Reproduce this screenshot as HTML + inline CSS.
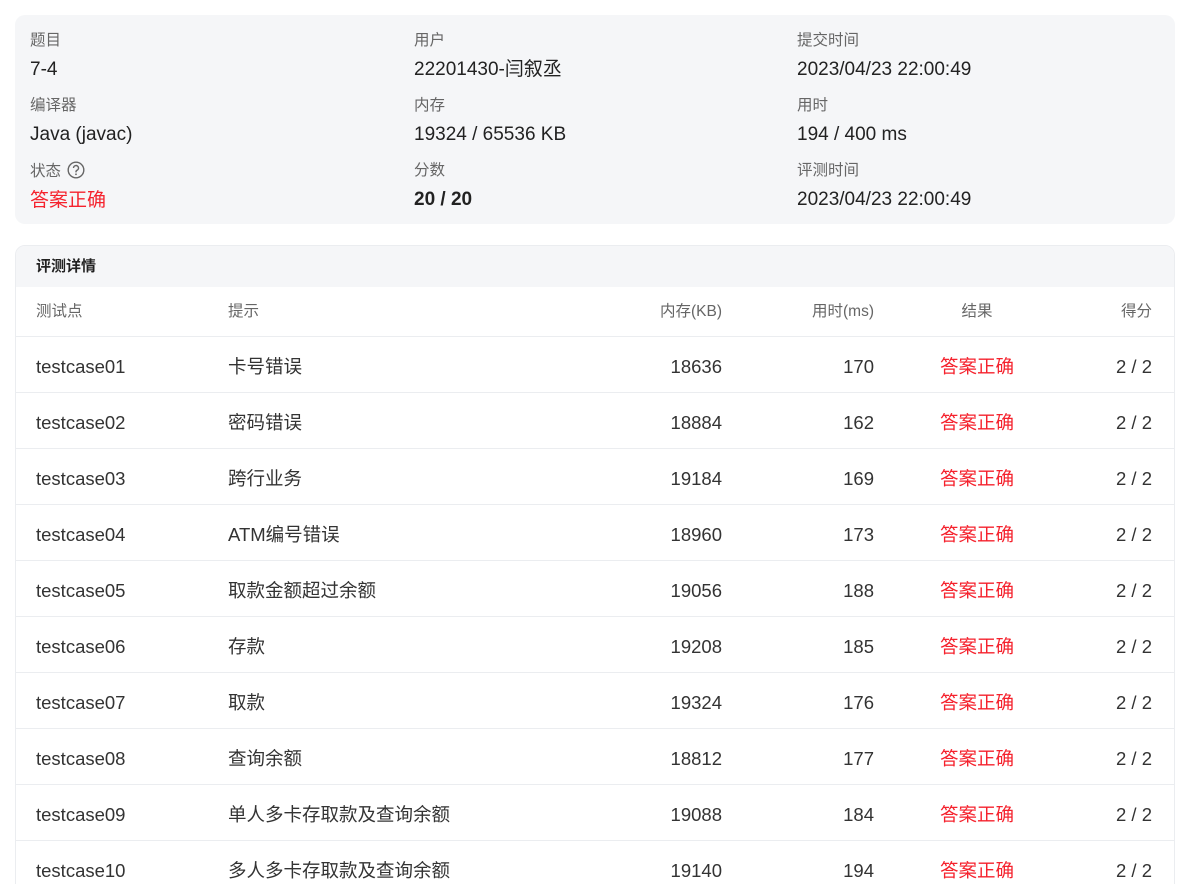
<!DOCTYPE html>
<html><head><meta charset="utf-8"><style>
*{margin:0;padding:0;box-sizing:border-box}
html,body{width:1180px;height:884px;overflow:hidden}
body{background:#fff;font-family:"Liberation Sans","Noto Sans CJK SC",sans-serif;color:#333;position:relative}
.card{position:absolute;left:15px;top:15px;width:1160px;height:209px;background:#f5f6f8;border-radius:10px}
.it{position:absolute}
.lb{font-size:15.5px;color:#666;line-height:20px;margin-top:1px}
.vl{font-size:19px;color:#222;line-height:24px;margin-top:7px}
.red{color:#f5222d}
.t2{position:absolute;left:15px;top:245px;width:1160px;height:700px;border:1px solid #ebedf0;border-radius:10px;overflow:hidden}
.hd{height:41px;background:#f5f6f8;font-size:15px;line-height:41px;padding-left:20px;color:#222;font-weight:bold}
.row{position:relative;height:56px;border-bottom:1px solid #ebedf0;font-size:18.5px;color:#333}
.row.h{height:50px;font-size:15.5px;color:#666}
.row span{position:absolute;top:2px;line-height:56px}
.row.h span{line-height:50px;top:0}
.c1{left:20px}.c2{left:212px}
.c3{right:452px;text-align:right}.c4{right:300px}
.c5{left:911px;width:100px;text-align:center}.c6{right:22px}
</style></head><body>
<div class="card">
<div class="it" style="left:15px;top:15px"><div class="lb">题目</div><div class="vl">7-4</div></div>
<div class="it" style="left:15px;top:80px"><div class="lb">编译器</div><div class="vl">Java (javac)</div></div>
<div class="it" style="left:15px;top:145px"><div class="lb">状态 <svg width="18" height="18" viewBox="0 0 18 18" style="vertical-align:-3px;margin-left:2px"><circle cx="9" cy="9" r="7.8" fill="none" stroke="#666" stroke-width="1.4"/><path d="M6.5 7a2.5 2.5 0 1 1 3.5 2.3c-.7.3-1 .8-1 1.5v.6" fill="none" stroke="#666" stroke-width="1.4"/><circle cx="9" cy="13.3" r=".9" fill="#666"/></svg></div><div class="vl red">答案正确</div></div>
<div class="it" style="left:399px;top:15px"><div class="lb">用户</div><div class="vl">22201430-闫叙丞</div></div>
<div class="it" style="left:399px;top:80px"><div class="lb">内存</div><div class="vl">19324 / 65536 KB</div></div>
<div class="it" style="left:399px;top:145px"><div class="lb">分数</div><div class="vl" style="font-weight:bold">20 / 20</div></div>
<div class="it" style="left:782px;top:15px"><div class="lb">提交时间</div><div class="vl">2023/04/23 22:00:49</div></div>
<div class="it" style="left:782px;top:80px"><div class="lb">用时</div><div class="vl">194 / 400 ms</div></div>
<div class="it" style="left:782px;top:145px"><div class="lb">评测时间</div><div class="vl">2023/04/23 22:00:49</div></div>
</div>
<div class="t2">
<div class="hd">评测详情</div>
<div class="row h"><span class="c1">测试点</span><span class="c2">提示</span><span class="c3">内存(KB)</span><span class="c4">用时(ms)</span><span class="c5">结果</span><span class="c6">得分</span></div>
<div class="row"><span class="c1">testcase01</span><span class="c2">卡号错误</span><span class="c3">18636</span><span class="c4">170</span><span class="c5 red">答案正确</span><span class="c6">2 / 2</span></div>
<div class="row"><span class="c1">testcase02</span><span class="c2">密码错误</span><span class="c3">18884</span><span class="c4">162</span><span class="c5 red">答案正确</span><span class="c6">2 / 2</span></div>
<div class="row"><span class="c1">testcase03</span><span class="c2">跨行业务</span><span class="c3">19184</span><span class="c4">169</span><span class="c5 red">答案正确</span><span class="c6">2 / 2</span></div>
<div class="row"><span class="c1">testcase04</span><span class="c2">ATM编号错误</span><span class="c3">18960</span><span class="c4">173</span><span class="c5 red">答案正确</span><span class="c6">2 / 2</span></div>
<div class="row"><span class="c1">testcase05</span><span class="c2">取款金额超过余额</span><span class="c3">19056</span><span class="c4">188</span><span class="c5 red">答案正确</span><span class="c6">2 / 2</span></div>
<div class="row"><span class="c1">testcase06</span><span class="c2">存款</span><span class="c3">19208</span><span class="c4">185</span><span class="c5 red">答案正确</span><span class="c6">2 / 2</span></div>
<div class="row"><span class="c1">testcase07</span><span class="c2">取款</span><span class="c3">19324</span><span class="c4">176</span><span class="c5 red">答案正确</span><span class="c6">2 / 2</span></div>
<div class="row"><span class="c1">testcase08</span><span class="c2">查询余额</span><span class="c3">18812</span><span class="c4">177</span><span class="c5 red">答案正确</span><span class="c6">2 / 2</span></div>
<div class="row"><span class="c1">testcase09</span><span class="c2">单人多卡存取款及查询余额</span><span class="c3">19088</span><span class="c4">184</span><span class="c5 red">答案正确</span><span class="c6">2 / 2</span></div>
<div class="row"><span class="c1">testcase10</span><span class="c2">多人多卡存取款及查询余额</span><span class="c3">19140</span><span class="c4">194</span><span class="c5 red">答案正确</span><span class="c6">2 / 2</span></div>
</div>
</body></html>
